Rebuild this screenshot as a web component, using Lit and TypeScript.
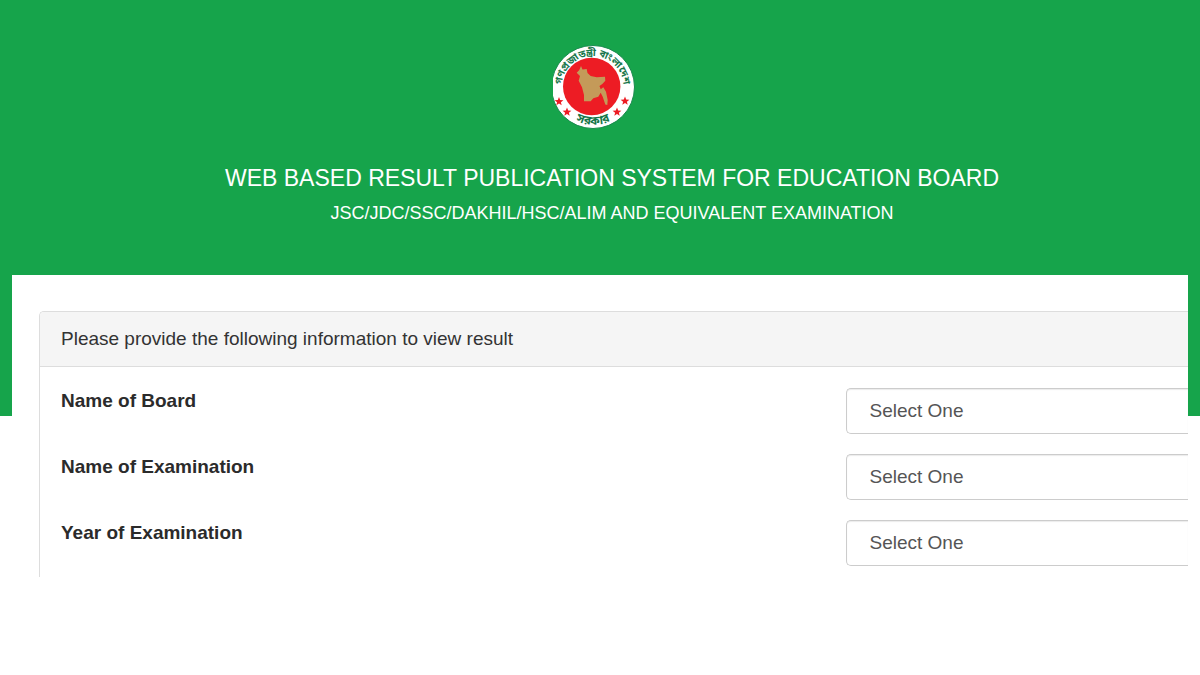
import { LitElement, html, css, svg } from "lit";
import { customElement } from "lit/decorators.js";

const fields = [
  { id: "board", label: "Name of Board" },
  { id: "exam", label: "Name of Examination" },
  { id: "year", label: "Year of Examination" },
];

const stars = [
  [6, 57.5],
  [14, 68],
  [64, 68],
  [72, 57],
];

@customElement("government-seal")
class GovernmentSeal extends LitElement {
  static styles = css`
    :host {
      display: block;
    }
    .seal {
      display: block;
      width: 84px;
      height: 86px;
    }
    .script {
      font-family: "Noto Sans Bengali", "Noto Sans", sans-serif;
      font-weight: 700;
      fill: #17764a;
    }
  `;

  render() {
    return html`
      <svg class="seal" viewBox="0 0 84 86" role="img" aria-label="Government seal of Bangladesh">
        <defs>
          <path id="upper" d="M8.2 47L8.500 43A31 31 0 0 1 70.500 43L70.800 47" />
          <path id="lower" d="M7 61A37.500 37.500 0 0 0 73 61" />
        </defs>
        <circle cx="40" cy="43" r="41.500" fill="#fff" stroke="#178a4c" stroke-width="1" />
        <circle cx="38.700" cy="42.500" r="28.700" fill="#ed1c24" />
        <path
          fill="#c49a59"
          d="M28 22L29.500 25.500 33.700 25 34.500 29 37.700 32 43.700 33.300 52 32.700 52.300 36.700 49.300 40 46.500 42 47.700 45.300 50.300 43.300 53 47.700 54.700 56 54.300 61 52.300 60.500 49.700 52.700 47.700 48.700 45.300 52.700 40.300 54.300 37.700 57.300 31 57.300 31 51 29 43.300 25.700 36.700 27 32 23.700 28.700 26.300 26z"
        />
        ${stars.map(
          ([x, y]) => svg`<path fill="#ed1c24" transform="translate(${x} ${y})"
            d="M0-4.500L1.200-1.500 4.400-1.300 1.900.7 2.700 3.800 0 2.100-2.700 3.800-1.900.7-4.400-1.300-1.200-1.500z" />`
        )}
        <text class="script" font-size="10">
          <textPath href="#upper" startOffset="50%" text-anchor="middle">গণপ্রজাতন্ত্রী বাংলাদেশ</textPath>
        </text>
        <text class="script" font-size="12">
          <textPath href="#lower" startOffset="50%" text-anchor="middle">সরকার</textPath>
        </text>
      </svg>
    `;
  }
}

@customElement("app-root")
class AppRoot extends LitElement {
  static styles = css`
    :host {
      display: block;
      min-height: 100vh;
      background: #fff;
      color: #333;
      font-family: "Liberation Sans", Arial, sans-serif;
      font-size: 19px;
      line-height: 26px;
    }
    .banner {
      display: flex;
      flex-direction: column;
      align-items: center;
      padding: 44px 0 189px 24px;
      background: #16a44b;
      color: #fff;
      text-align: center;
    }
    .logo {
      margin-right: 34px;
    }
    .title,
    .subtitle {
      margin: 0;
      font-weight: 400;
    }
    .title {
      margin-top: 32px;
      font-size: 23px;
      line-height: 32px;
    }
    .subtitle {
      margin-top: 5px;
      font-size: 18px;
      line-height: 28px;
    }
    .sheet {
      position: relative;
      margin: -141px 12px 0;
      padding: 36px 0 0 27px;
      background: #fff;
    }
    .panel {
      border: 1px solid #ddd;
      border-width: 1px 0 0 1px;
      border-top-left-radius: 5px;
    }
    .heading {
      margin: 0;
      padding: 14px 21px;
      border-bottom: 1px solid #ddd;
      border-top-left-radius: 4px;
      background: #f5f5f5;
      font-size: 19px;
      font-weight: 400;
    }
    .form {
      display: grid;
      gap: 20px;
      padding: 21px 0 11px 21px;
    }
    .row {
      display: grid;
      grid-template-columns: 2.3fr 1fr;
      align-items: start;
    }
    .label {
      font-weight: 700;
      color: #2b2b2b;
    }
    .select {
      appearance: none;
      box-sizing: border-box;
      width: 100%;
      height: 46px;
      margin: 0;
      padding: 0 22px;
      border: 1px solid #ccc;
      border-right: 0;
      border-radius: 5px 0 0 5px;
      background: #fff;
      box-shadow: inset 0 1px 1px rgba(0, 0, 0, 0.08);
      color: #555;
      font: inherit;
    }
  `;

  render() {
    return html`
      <header class="banner">
        <government-seal class="logo"></government-seal>
        <h1 class="title">WEB BASED RESULT PUBLICATION SYSTEM FOR EDUCATION BOARD</h1>
        <p class="subtitle">JSC/JDC/SSC/DAKHIL/HSC/ALIM AND EQUIVALENT EXAMINATION</p>
      </header>
      <main class="sheet">
        <section class="panel">
          <h2 class="heading">Please provide the following information to view result</h2>
          <form class="form">
            ${fields.map(
              (field) => html`
                <div class="row">
                  <label class="label" for=${field.id}>${field.label}</label>
                  <select class="select" id=${field.id} name=${field.id}>
                    <option>Select One</option>
                  </select>
                </div>
              `
            )}
          </form>
        </section>
      </main>
    `;
  }
}
